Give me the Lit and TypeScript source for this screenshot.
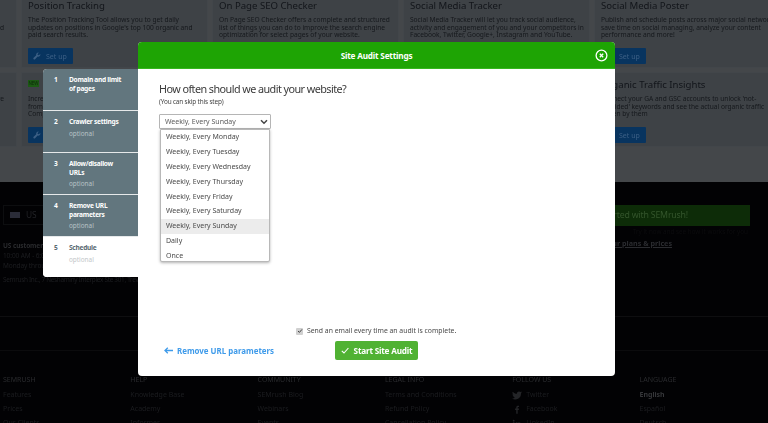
import { LitElement, html, css } from "lit";
import { customElement } from "lit/decorators.js";

const wrench = html`<svg class="wr" viewBox="0 0 12 12"><path d="M10.8 3.1 8.9 5 7.2 4.6 6.8 2.9 8.7 1A3 3 0 0 0 4.9 4.8L1 8.7a1.4 1.4 0 0 0 2.1 2.1L7 6.9a3 3 0 0 0 3.8-3.8z" fill="currentColor"/></svg>`;

type Card = { title: string; lines: string[]; badge?: boolean; ghost?: boolean };
type Step = { n: string; lines: string[]; note?: string };

const cardsTop: Card[] = [
  { title: "Backlink Audit", lines: ["\u00a0", "Analyze your backlink profile and get it improved", "\u00a0"], ghost: true },
  { title: "Position Tracking", lines: ["The Position Tracking Tool allows you to get daily", "updates on positions in Google's top 100 organic and", "paid search results."] },
  { title: "On Page SEO Checker", lines: ["On Page SEO Checker offers a complete and structured", "list of things you can do to improve the search engine", "optimization for select pages of your website."] },
  { title: "Social Media Tracker", lines: ["Social Media Tracker will let you track social audience,", "activity and engagement of you and your competitors in", "Facebook, Twitter, Google+, Instagram and YouTube."] },
  { title: "Social Media Poster", lines: ["Publish and schedule posts across major social networks,", "save time on social managing, analyze your content", "performance and more!"] },
];
const cardsBottom: Card[] = [
  { title: "Brand Monitoring", lines: ["Track mentions of your brand and improve", "\u00a0", "\u00a0"], ghost: true },
  { title: "Content Analyzer", badge: true, lines: ["Increase organic traffic to your website", "from content ideas based on your", "Competitors"] },
  { title: "Content Audit", lines: ["Audit the content of your website", "and find the pages to improve", "\u00a0"] },
  { title: "Post Tracking", lines: ["Track the performance of your posts", "and see how they are doing", "\u00a0"] },
  { title: "Organic Traffic Insights", lines: ["Connect your GA and GSC accounts to unlock 'not-", "provided' keywords and see the actual organic traffic", "driven by them"] },
];
const steps: Step[] = [
  { n: "1", lines: ["Domain and limit", "of pages"] },
  { n: "2", lines: ["Crawler settings"], note: "optional" },
  { n: "3", lines: ["Allow/disallow", "URLs"], note: "optional" },
  { n: "4", lines: ["Remove URL", "parameters"], note: "optional" },
  { n: "5", lines: ["Schedule"], note: "optional" },
];
const options = ["Monday","Tuesday","Wednesday","Thursday","Friday","Saturday","Sunday"].map(d => `Weekly, Every ${d}`).concat(["Daily","Once"]);
const footer: [string, string[]][] = [
  ["SEMRUSH", ["Features","Prices","Our Clients"]],
  ["HELP", ["Knowledge Base","Academy","Informer"]],
  ["COMMUNITY", ["SEMrush Blog","Webinars","Events"]],
  ["LEGAL INFO", ["Terms and Conditions","Refund Policy","Cancellation Policy"]],
  ["FOLLOW US", ["Twitter","Facebook","LinkedIn"]],
  ["LANGUAGE", ["English","Español","Deutsch"]],
];
const socials: Record<string, unknown> = {
  Twitter: html`<svg class="soc" viewBox="0 0 12 10"><path d="M12 1.2c-.4.2-.9.3-1.4.4.5-.3.9-.8 1.1-1.4-.5.3-1 .5-1.6.6a2.5 2.5 0 0 0-4.2 2.2C3.900 2.900 2.100 2 .9.500c-.7 1.100-.3 2.500.7 3.200-.4 0-.8-.1-1.100-.3 0 1.200.8 2.200 2 2.400-.4.100-.7.100-1.100 0 .3 1 1.200 1.700 2.300 1.700A5 5 0 0 1 0 8.600 7 7 0 0 0 10.800 2.500c.5-.3.9-.8 1.200-1.300z" fill="currentColor"/></svg>`,
  Facebook: html`<svg class="soc" viewBox="0 0 12 10"><path d="M6.800 10V5.500h1.400l.2-1.700H6.800v-1c0-.5.200-.8.800-.8h.9V.500C8.300.400 7.900.400 7.300.400 6 .400 5.100 1.200 5.100 2.600v1.200H3.700v1.700h1.400V10z" fill="currentColor"/></svg>`,
  LinkedIn: html`<svg class="soc" viewBox="0 0 12 10"><path d="M1 3.500h2V10H1zM2 .500a1.100 1.100 0 1 1 0 2.200 1.100 1.100 0 0 1 0-2.200zM4.500 3.500h1.900v.9c.3-.5 1-1 2-1 2 0 2.400 1.300 2.400 3V10h-2V6.900c0-.8 0-1.700-1-1.700s-1.300.8-1.300 1.600V10h-2z" fill="currentColor"/></svg>`,
};

@customElement("app-root")
export class AppRoot extends LitElement {
  static styles = css`
    :host { display: block; width: 768px; height: 423px; overflow: hidden; position: relative;
      font-family: "Noto Sans", "Open Sans", sans-serif; background: #020204; }
    * { box-sizing: border-box; }
    .page { width: 768px; height: 423px; overflow: hidden; filter: blur(0.35px); }
    .top { height: 182px; background: #44474a; overflow: hidden; }
    .row { display: grid; grid-template-columns: repeat(5, 187px); gap: 4px; margin-bottom: 4px; margin-left: -170px; }
    .row.r1 { margin-top: -7px; }
    .card { height: 75px; background: #3e4246; border: 1px solid #42464a; padding: 6px; color: #15181c; overflow: hidden; }
    .card h3 { margin: 0 0 5px; font-size: 9.6px; line-height: 11px; font-weight: 400; color: #12151a; white-space: nowrap; }
    .card p { margin: 0; font-size: 6.6px; line-height: 7.5px; height: 23px; color: #15181c; white-space: nowrap; }
    .card p span { display: block; }
    .card.ghost p { text-align: right; padding-right: 6px; }
    .setup { display: inline-flex; align-items: center; gap: 5px; margin-top: 9px; height: 16px; width: 45px; padding-left: 5px; background: #08345f; color: #3c5f85; font-size: 7px; border-radius: 1px; }
    .wr { width: 8px; height: 8px; flex: none; }
    .badge { display: block; width: 11px; height: 7px; background: #1c5a14; color: #0d2b0a; font-size: 4.5px; line-height: 7px; text-align: center; margin: 1px 0 8px; }
    .foot { height: 241px; background: #020204; color: #1c1d20; }
    .foot-main { height: 135px; display: flex; justify-content: space-between; padding: 23px 18px 0 3px; border-bottom: 1px solid #0e0e10; }
    .loc { font-size: 6.5px; line-height: 10px; color: #1d1e21; letter-spacing: -.1px; }
    .usbox { width: 46px; height: 20px; border: 1px solid #0d0e10; font-size: 8.4px; display: flex; align-items: center; gap: 6px; padding-left: 6px; margin-bottom: 16px; color: #222327; }
    .flag { width: 10px; height: 6px; background: #2a2c38; }
    .loc b { display: block; color: #2a2b2e; }
    .loc .addr { margin-top: 4px; white-space: nowrap; font-size: 6.4px; letter-spacing: -.3px; }
    .cta { width: 230px; }
    .green { height: 21px; background: #0d2c08 radial-gradient(circle, #1a4212 .6px, transparent .7px) 0 0 / 6px 6px; color: #34552c; font-size: 8.8px; line-height: 21px; text-align: right; padding-right: 62px; white-space: nowrap; letter-spacing: -.2px; }
    .dim { font-size: 6.3px; line-height: 9px; margin-top: 1px; color: #0c0c0e; text-align: right; padding-right: 2px; }
    .plans { display: block; margin-top: 3px; font-size: 7.2px; line-height: 9px; color: #2b2c30; text-decoration: underline; text-align: right; padding-right: 78px; font-weight: 700; }
    .band { height: 34px; border-bottom: 1px solid #0b0b0d; }
    .cols { display: grid; grid-template-columns: repeat(6, 127.3px); padding: 24px 0 0 3px; }
    .col h4 { margin: 0 0 3px; font-size: 7px; line-height: 10px; font-weight: 400; color: #2a2b2e; }
    .col div { font-size: 7px; line-height: 14px; color: #1c1d20; display: flex; align-items: center; gap: 4px; }
    .col div.on { font-weight: 700; color: #36373a; }
    .soc { width: 10px; height: 9px; flex: none; color: #232427; }
    .overlay { position: absolute; inset: 0; filter: blur(0.3px); }
    .steps { position: absolute; left: 43px; top: 69px; width: 95px; height: 208px; border-radius: 4px 0 0 4px; overflow: hidden; background: #fff; }
    .step { height: 42px; background: #62767e; color: #fff; border-bottom: 1px solid #e6e9ea; display: grid; grid-template-columns: 15px 1fr; padding: 7px 2px 0 11px; font-size: 6.6px; line-height: 8.6px; font-weight: 700; white-space: nowrap; }
    .step .t { display: block; letter-spacing: -.28px; }
    .step small { display: block; font-size: 6.4px; font-weight: 400; color: #b8c3c7; line-height: 9px; margin-top: 2px; }
    .step:last-child { height: 41px; background: #fff; color: #5a6b73; border: 0; }
    .step:last-child small { color: #c2c6c8; }
    .modal { position: absolute; left: 138px; top: 42px; width: 477px; height: 334px; background: #fff; border-radius: 4px; overflow: hidden; color: #333; display: flex; flex-direction: column; }
    .head { height: 27px; flex: none; background: #1ea404; border-bottom: 1px solid #35b71d; color: #fff; font-size: 8.2px; font-weight: 700; letter-spacing: -.2px; display: flex; align-items: center; justify-content: center; position: relative; }
    .close { position: absolute; right: 7px; top: 7px; width: 13px; height: 13px; }
    .body { flex: 1; padding: 12px 21px 0; display: flex; flex-direction: column; }
    h2 { margin: 0; font-size: 10.8px; line-height: 16px; font-weight: 400; color: #3a3a3a; white-space: nowrap; letter-spacing: -.55px; }
    .skip { font-size: 6.4px; line-height: 9px; color: #444; letter-spacing: -.15px; }
    .selectwrap { position: relative; width: 112px; margin-top: 8px; }
    .select { height: 15px; border: 1px solid #b5b5b5; border-radius: 1px; font-size: 7px; color: #5d5d5d; display: flex; align-items: center; justify-content: space-between; padding: 0 2px 0 5px; white-space: nowrap; }
    .chev { width: 8px; height: 6px; }
    .menu { position: absolute; top: 15px; left: 1px; width: 110px; height: 133px; background: #fff; border: 1px solid #b8b8b8; border-radius: 0 0 2px 2px; box-shadow: 0 1px 3px rgba(0,0,0,.3); }
    .opt { height: 14.9px; font-size: 7px; line-height: 14.9px; padding-left: 5px; color: #4a4a4a; white-space: nowrap; }
    .opt.sel { background: #ececec; }
    .email { position: absolute; left: 158px; top: 284px; display: flex; align-items: center; gap: 4px; font-size: 6.85px; line-height: 10px; color: #4a4a4a; white-space: nowrap; }
    .cb { width: 7px; height: 7px; background: #d0d0d0; border-radius: 1px; display: flex; align-items: center; justify-content: center; }
    .cb svg { width: 6px; height: 6px; }
    .foot-row { position: absolute; left: 26px; top: 299px; display: flex; align-items: center; }
    .back { width: 171px; display: flex; align-items: center; gap: 4px; color: #3f9bea; font-size: 7.9px; font-weight: 700; white-space: nowrap; }
    .back svg { width: 9px; height: 7px; }
    .go { width: 83px; height: 19px; background: #50b233; border-radius: 2px; color: #fff; font-size: 8.2px; font-weight: 700; letter-spacing: -.2px; display: flex; align-items: center; justify-content: center; gap: 5px; white-space: nowrap; }
    .go svg { width: 8px; height: 7px; }
  `;

  private card(c: Card) {
    return html`<div class="card ${c.ghost ? "ghost" : ""}">
      ${c.badge ? html`<span class="badge">NEW</span>` : html`<h3>${c.title}</h3>`}
      <p>${c.lines.map(l => html`<span>${l}</span>`)}</p>
      <span class="setup">${wrench}Set up</span>
    </div>`;
  }

  render() {
    return html`
      <div class="page">
        <div class="top">
          <div class="row r1">${cardsTop.map(c => this.card(c))}</div>
          <div class="row">${cardsBottom.map(c => this.card(c))}</div>
        </div>
        <div class="foot">
          <div class="foot-main">
            <div class="loc">
              <div class="usbox"><span class="flag"></span>US</div>
              <b>US customer support</b>
              <div>10:00 AM - 6:00 PM (EST)</div>
              <div>Monday through Friday</div>
              <div class="addr">Semrush Inc., 7 Neshaminy Interplex Ste 301, Trevose, PA 19053</div>
            </div>
            <div class="cta">
              <div class="green">Get started with SEMrush!</div>
              <div class="dim">Try it now and see how it works for you</div>
              <a class="plans">See our plans &amp; prices</a>
            </div>
          </div>
          <div class="band"></div>
          <div class="cols">
            ${footer.map(([h, items]) => html`<div class="col"><h4>${h}</h4>${items.map(t => html`<div class=${t === "English" ? "on" : ""}>${socials[t] ?? ""}${t}</div>`)}</div>`)}
          </div>
        </div>
      </div>
      <div class="overlay">
        <div class="steps">
          ${steps.map(s => html`<div class="step"><span>${s.n}</span><div>${s.lines.map(l => html`<span class="t">${l}</span>`)}${s.note ? html`<small>${s.note}</small>` : ""}</div></div>`)}
        </div>
        <div class="modal">
          <div class="head">Site Audit Settings
            <svg class="close" viewBox="0 0 13 13"><circle cx="6.500" cy="6.500" r="5.400" fill="none" stroke="#fff" stroke-width="1.300"/><path d="M4.800 4.800l3.400 3.400M8.200 4.800l-3.400 3.400" stroke="#fff" stroke-width="1.300"/></svg>
          </div>
          <div class="body">
            <h2>How often should we audit your website?</h2>
            <div class="skip">(You can skip this step)</div>
            <div class="selectwrap">
              <div class="select">Weekly, Every Sunday
                <svg class="chev" viewBox="0 0 8 6"><path d="M1 1.200 4 4.200 7 1.200" fill="none" stroke="#444" stroke-width="1.500"/></svg>
              </div>
              <div class="menu">${options.map(o => html`<div class="opt ${o.endsWith("Sunday") ? "sel" : ""}">${o}</div>`)}</div>
            </div>
            <div class="email"><span class="cb"><svg viewBox="0 0 6 6"><path d="M1 3l1.400 1.400L5 1.400" fill="none" stroke="#444" stroke-width="1"/></svg></span>Send an email every time an audit is complete.</div>
            <div class="foot-row">
              <div class="back"><svg viewBox="0 0 9 7"><path d="M9 3.500H1.200M3.800 .8 1 3.500l2.800 2.700" fill="none" stroke="#3f9bea" stroke-width="1.300"/></svg>Remove URL parameters</div>
              <div class="go"><svg viewBox="0 0 8 7"><path d="M.8 3.800 3 6 7.400 1" fill="none" stroke="#fff" stroke-width="1.100"/></svg>Start Site Audit</div>
            </div>
          </div>
        </div>
      </div>
    `;
  }
}
